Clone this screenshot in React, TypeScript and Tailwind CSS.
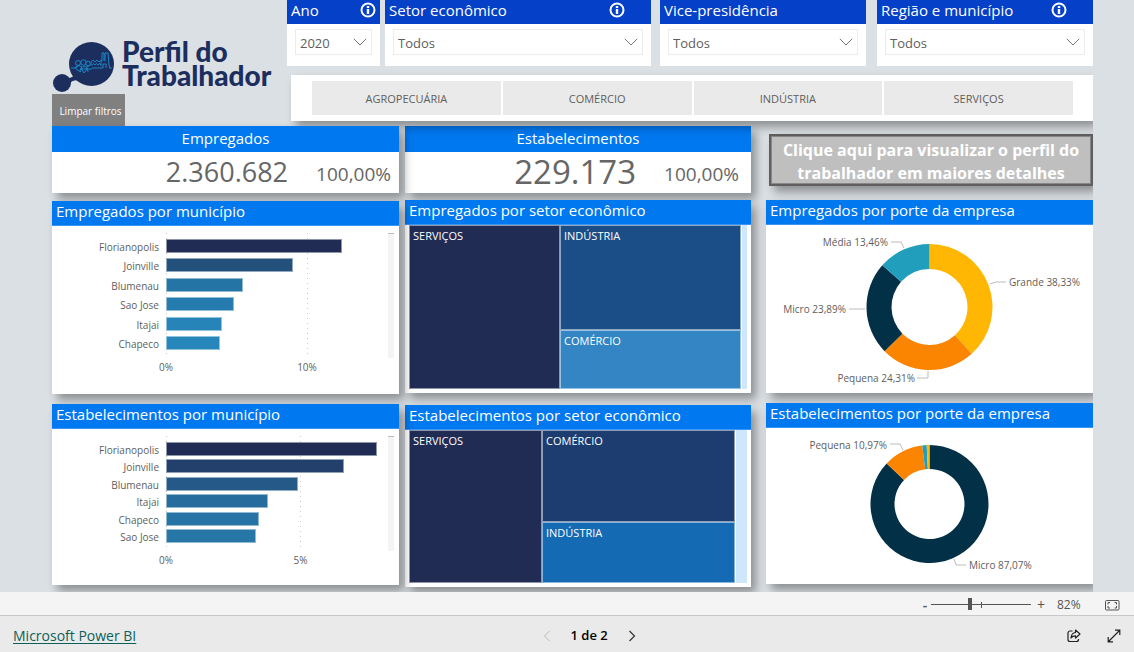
import type { FC, ReactNode } from "react";
import clsx from "clsx";

type Bar = { label: string; value: number; color: string };
type Slice = { value: number; color: string };
type Callout = { text: string; x: number; y: number; line: string; anchor?: "start" | "end" };

const employeesByCity: Bar[] = [
    { label: "Florianopolis", value: 12.45, color: "#212c55" },
    { label: "Joinville", value: 9.0, color: "#24507c" },
    { label: "Blumenau", value: 5.45, color: "#2574a6" },
    { label: "Sao Jose", value: 4.85, color: "#267bae" },
    { label: "Itajai", value: 3.95, color: "#2784b8" },
    { label: "Chapeco", value: 3.85, color: "#2786ba" },
];

const companiesByCity: Bar[] = [
    { label: "Florianopolis", value: 7.84, color: "#212c55" },
    { label: "Joinville", value: 6.6, color: "#233f6b" },
    { label: "Blumenau", value: 4.9, color: "#255a88" },
    { label: "Itajai", value: 3.78, color: "#266d9e" },
    { label: "Chapeco", value: 3.45, color: "#2674a6" },
    { label: "Sao Jose", value: 3.35, color: "#2676a8" },
];

const employeesBySize: Slice[] = [
    { value: 38.33, color: "#ffb703" },
    { value: 24.31, color: "#fb8500" },
    { value: 23.89, color: "#023047" },
    { value: 13.46, color: "#219ebc" },
];

const companiesBySize: Slice[] = [
    { value: 87.07, color: "#023047" },
    { value: 10.97, color: "#fb8500" },
    { value: 1.2, color: "#219ebc" },
    { value: 0.76, color: "#ffb703" },
];

const shadow = "shadow-[5px_6px_9px_rgba(0,0,0,0.36)]";
const gridline =
    "absolute inset-y-0 w-px bg-[repeating-linear-gradient(to_bottom,#ccc_0_1px,transparent_1px_5px)]";

const InfoIcon: FC = () => (
    <svg viewBox="0 0 16 16" className="size-4" fill="none" stroke="#fff" aria-hidden="true">
        <circle cx="8" cy="8" r="6.5" strokeWidth="2" />
        <path d="M8 7v5M8 4v2" strokeWidth="2.4" />
    </svg>
);

const Logo: FC = () => (
    <div className="flex items-center gap-2 text-[#1c2e5e]">
        <svg viewBox="0 0 62 52" className="w-[62px] h-[52px] shrink-0" aria-hidden="true">
            <ellipse cx="39.5" cy="24" rx="22.5" ry="22" fill="currentColor" />
            <circle cx="10" cy="43" r="9" fill="currentColor" />
            <path d="M16 38Q21 38 24 33L31 42Q22 38 18 43Z" fill="currentColor" />
            <g fill="none" stroke="#1c8fd0" strokeWidth="0.9">
                <path d="M19 28h5q1-2 3-2.5M28 29h12M40 28h11v-4h3v4M57 28h3" />
                <circle cx="26" cy="23" r="2.5" />
                <circle cx="31.5" cy="22.5" r="2.7" />
                <circle cx="36" cy="23.5" r="2.3" />
                <path d="M23 29q1-4 4-3.500 3 0 3 4M28 32q0-5 4-5.500 4 0 4 5.500M34 29q0-3 3-3" />
                <path d="M29 28l3 5 4-5M24 29l5 3" />
                <path d="M39 26v-4l2-2 2 2 2-2 2 2 2-2v6M40 25q2-3 3 0 2-3 3 0 2-3 3 0" />
                <path d="M50 21v-8h2v8M53 21v-8h3l1 12 1 3" />
            </g>
        </svg>
        <p className="pb-1.5 font-[Lato,sans-serif] font-black text-[28px] leading-6 whitespace-nowrap">
            Perfil do
            <br />
            Trabalhador
        </p>
    </div>
);

const Filter: FC<{ id: string; label: string; value: string; info?: string; className: string }> = ({
    id,
    label,
    value,
    info,
    className,
}) => (
    <div className={clsx("min-w-0 bg-white h-[66px]", className)}>
        <div className={clsx("flex items-center justify-between h-6 pl-1 pb-1 bg-[#0540c8] text-white", info)}>
            <label htmlFor={id} className="text-[15px] leading-[18px] whitespace-nowrap">
                {label}
            </label>
            {info && <InfoIcon />}
        </div>
        <div className="relative mt-[5px] mx-2 h-[26px] border border-[#ececec]">
            <select
                id={id}
                className="appearance-none block w-full h-full pl-1 pt-1 text-[13px] text-[#605e5c] bg-white"
            >
                <option>{value}</option>
            </select>
            <svg
                viewBox="0 0 14 8"
                className="absolute right-1 top-2 w-3.5 h-2 pointer-events-none"
                fill="none"
                stroke="#777"
                aria-hidden="true"
            >
                <path d="M.8.8 7 7 13.200.8" />
            </svg>
        </div>
    </div>
);

const Kpi: FC<{ title: string; children: ReactNode }> = ({ title, children }) => (
    <section className={clsx("h-[67px] bg-white text-[#666]", shadow)}>
        <h2 className="h-[26px] text-center text-[15px] leading-6 text-white bg-[#0078f0]">{title}</h2>
        <div className="flex items-center justify-end h-10 gap-7">{children}</div>
    </section>
);

const Card: FC<{ title: string; className: string; children: ReactNode }> = ({ title, className, children }) => (
    <section className={clsx("flex flex-col bg-white", shadow, className)}>
        <h2 className="h-[25px] shrink-0 pl-1 text-[15px] leading-5 text-white bg-[#0078f0] border-b border-[#3a95f5] whitespace-nowrap">
            {title}
        </h2>
        {children}
    </section>
);

const BarChart: FC<{ bars: Bar[]; max: number; tick: number; plot: string }> = ({ bars, max, tick, plot }) => (
    <div className="flex pt-[7px] pr-[5px] text-[10px] leading-3 text-[#605e5c]">
        <div className={clsx("flex flex-col justify-between w-[107px] mr-[7px] pt-1.5 pb-2 text-right", plot)}>
            {bars.map((bar) => (
                <span key={bar.label} className="h-3.5 leading-4">
                    {bar.label}
                </span>
            ))}
        </div>
        <div className="flex-1 mr-0.5">
            <div className={clsx("relative flex flex-col justify-between pt-1.5 pb-2", plot)}>
                <i className={clsx(gridline, "left-0")} />
                <i className={gridline} style={{ left: `${(tick / max) * 100}%` }} />
                {bars.map((bar) => (
                    <div
                        key={bar.label}
                        className="relative h-3.5 border border-white/50"
                        style={{ width: `${(bar.value / max) * 100}%`, backgroundColor: bar.color }}
                    />
                ))}
            </div>
            <div className="relative h-3 mt-[3px]">
                <span className="absolute left-0 -translate-x-1/2">0%</span>
                <span className="absolute -translate-x-1/2" style={{ left: `${(tick / max) * 100}%` }}>
                    {tick}%
                </span>
            </div>
        </div>
        <div className={clsx("w-1.5 bg-[#f4f4f4] border-t border-[#bbb]", plot)} />
    </div>
);

const Tile: FC<{ label: string; className: string }> = ({ label, className }) => (
    <div className={clsx("pl-[3px] pt-0.5 text-[11px] leading-4 text-white border border-white/50", className)}>
        {label}
    </div>
);

const arc = (cx: number, cy: number, outer: number, inner: number, from: number, to: number) => {
    const at = (r: number, t: number) =>
        `${cx + r * Math.sin(t * 2 * Math.PI)} ${cy - r * Math.cos(t * 2 * Math.PI)}`;
    const large = to - from > 0.5 ? 1 : 0;
    return `M${at(outer, from)}A${outer} ${outer} 0 ${large} 1 ${at(outer, to)}L${at(inner, to)}A${inner} ${inner} 0 ${large} 0 ${at(inner, from)}Z`;
};

const Donut: FC<{ slices: Slice[]; cy: number; outer: number; inner: number; callouts: Callout[]; title: string }> = ({
    slices,
    cy,
    outer,
    inner,
    callouts,
    title,
}) => {
    let start = 0;

    return (
        <svg viewBox="0 0 327 156" className="w-full h-[156px] overflow-visible" role="img" aria-label={title}>
            {slices.map((slice) => {
                const from = start;
                start += slice.value / 100;
                return (
                    <path
                        key={slice.color}
                        d={arc(163.5, cy, outer, inner, from, Math.min(start, 1))}
                        fill={slice.color}
                    />
                );
            })}
            {callouts.map((callout) => (
                <g key={callout.text}>
                    <path d={callout.line} fill="none" stroke="#bbb" />
                    <text x={callout.x} y={callout.y} fontSize="10" fill="#605e5c" textAnchor={callout.anchor}>
                        {callout.text}
                    </text>
                </g>
            ))}
        </svg>
    );
};

const StatusBar: FC = () => (
    <div className="flex items-center justify-end h-6 pt-0.5 pr-3.5 bg-[#f4f4f4] border-b border-[#c8c8c8] text-[#555]">
        <button type="button" aria-label="Reduzir" className="w-3 text-sm leading-5 font-semibold">
            -
        </button>
        <div className="relative flex items-center w-[100px] mr-0.5">
            <i className="absolute left-[50px] h-1.5 border-l border-[#555]" />
            <input
                type="range"
                aria-label="Zoom"
                min={0}
                max={100}
                defaultValue={39}
                className="relative w-full h-3 appearance-none bg-transparent [&::-webkit-slider-runnable-track]:h-px [&::-webkit-slider-runnable-track]:bg-[#555] [&::-webkit-slider-thumb]:appearance-none [&::-webkit-slider-thumb]:w-1 [&::-webkit-slider-thumb]:h-3 [&::-webkit-slider-thumb]:-mt-1.5 [&::-webkit-slider-thumb]:bg-[#555]"
            />
        </div>
        <button type="button" aria-label="Ampliar" className="w-4 text-sm leading-5">
            +
        </button>
        <span className="w-8 ml-2 text-xs">82%</span>
        <button type="button" aria-label="Ajustar à página" className="ml-4">
            <svg viewBox="0 0 15 12" className="w-[15px] h-3" fill="none" stroke="#555" aria-hidden="true">
                <rect x=".5" y="1.5" width="13.5" height="9.5" rx="1" />
                <path d="M5 3.500H3v2M9.500 3.500h2v2M5 9H3V7M9.500 9h2V7" />
            </svg>
        </button>
    </div>
);

const Footer: FC = () => (
    <footer className="flex items-center justify-between flex-1 min-h-9 pt-[3px] pl-[13px] pr-3 bg-[#eaeaea]">
        <a href="https://powerbi.microsoft.com" className="text-sm text-[#0b6158] underline underline-offset-2">
            Microsoft Power BI
        </a>
        <nav className="flex items-center gap-5 pr-6 text-[13px] font-semibold text-black">
            <button type="button" aria-label="Página anterior" disabled>
                <svg viewBox="0 0 8 12" className="w-2 h-3" fill="none" stroke="#bbb" aria-hidden="true">
                    <path d="M6.500 1 1.500 6l5 5" />
                </svg>
            </button>
            <span>1 de 2</span>
            <button type="button" aria-label="Próxima página">
                <svg viewBox="0 0 8 12" className="w-2 h-3" fill="none" stroke="#333" strokeWidth="1.2" aria-hidden="true">
                    <path d="M1.500 1l5 5-5 5" />
                </svg>
            </button>
        </nav>
        <div className="flex items-center gap-6">
            <button type="button" aria-label="Compartilhar">
                <svg viewBox="0 0 16 16" className="size-4" fill="none" stroke="#222" strokeWidth="1.2" aria-hidden="true">
                    <path d="M6.500 3H4a2 2 0 0 0-2 2v6.500a2 2 0 0 0 2 2h6.500a2 2 0 0 0 2-2V11" />
                    <path d="M9.500 2l4.500 4-4.500 4V7.800Q6.500 7.800 5 10 5.500 4.800 9.500 4.500Z" strokeLinejoin="round" />
                </svg>
            </button>
            <button type="button" aria-label="Tela cheia">
                <svg viewBox="0 0 16 16" className="size-4" fill="none" stroke="#222" strokeWidth="1.2" aria-hidden="true">
                    <path d="M2.500 13.500l11-11M9 2.200h4.800V7M2.200 9v4.800H7" />
                </svg>
            </button>
        </div>
    </footer>
);

export default function App() {
    return (
        <div className="flex flex-col min-h-screen font-['Open_Sans','Noto_Sans',sans-serif] bg-[#dbe0e4]">
            <main className="mr-[41px] pl-[52px] pb-[5px] overflow-hidden">
                <div className="relative z-20 flex">
                    <div className="flex flex-col items-start justify-between w-[235px] shrink-0 pt-[39px] h-[126px]">
                        <Logo />
                        <button
                            type="button"
                            className="h-8 w-[73px] pl-1 pt-0.5 bg-[#808080] text-[10px] text-white whitespace-nowrap"
                        >
                            Limpar filtros
                        </button>
                    </div>
                    <div className="flex-1 min-w-0">
                        <div className="flex">
                            <Filter id="ano" label="Ano" value="2020" info="pr-1" className="flex-[93] mr-[5px]" />
                            <Filter
                                id="setor"
                                label="Setor econômico"
                                value="Todos"
                                info="pr-[26px]"
                                className="flex-[266] mr-[9px]"
                            />
                            <Filter id="vice" label="Vice-presidência" value="Todos" className="flex-[206] mr-[11px]" />
                            <Filter
                                id="regiao"
                                label="Região e município"
                                value="Todos"
                                info="pr-[26px]"
                                className="flex-[216]"
                            />
                        </div>
                        <div className={clsx("flex gap-0.5 mt-[9px] ml-1 py-1.5 pl-[21px] pr-5 bg-white", shadow)}>
                            {["AGROPECUÁRIA", "COMÉRCIO", "INDÚSTRIA", "SERVIÇOS"].map((sector) => (
                                <button
                                    key={sector}
                                    type="button"
                                    className="flex-1 h-[34px] pt-0.5 bg-[#eaeaea] text-[11px] text-[#605e5c]"
                                >
                                    {sector}
                                </button>
                            ))}
                        </div>
                    </div>
                </div>

                <div className="flex items-start">
                    <div className="relative z-30 flex-[347] min-w-0 mr-1.5">
                        <Kpi title="Empregados">
                            <span className="text-[27px]">2.360.682</span>
                            <span className="pr-2 pt-1 text-[19px]">100,00%</span>
                        </Kpi>
                        <Card title="Empregados por município" className="mt-2 h-[193px]">
                            <BarChart bars={employeesByCity} max={15.6} tick={10} plot="h-[125px]" />
                        </Card>
                        <Card title="Estabelecimentos por município" className="mt-2.5 h-[181px]">
                            <BarChart bars={companiesByCity} max={8.18} tick={5} plot="h-[115px]" />
                        </Card>
                    </div>

                    <div className="relative z-10 flex-[346] min-w-0 mr-[15px]">
                        <Kpi title="Estabelecimentos">
                            <span className="text-[33px]">229.173</span>
                            <span className="pr-3 pt-1 text-[19px]">100,00%</span>
                        </Kpi>
                        <Card title="Empregados por setor econômico" className="mt-[7px] h-[193px]">
                            <div className="flex flex-1 px-1 pb-1">
                                <Tile label="SERVIÇOS" className="flex-[146] bg-[#212c55]" />
                                <div className="flex flex-col flex-[181]">
                                    <Tile label="INDÚSTRIA" className="flex-[100] bg-[#1b4e86]" />
                                    <Tile label="COMÉRCIO" className="flex-[55] bg-[#3385c4]" />
                                </div>
                                <div className="w-[5px] ml-px bg-[#cfe7fd]" />
                            </div>
                        </Card>
                        <Card title="Estabelecimentos por setor econômico" className="mt-3 h-[182px]">
                            <div className="flex flex-1 px-1 pb-1">
                                <Tile label="SERVIÇOS" className="flex-[128] bg-[#212c55]" />
                                <div className="flex flex-col flex-[193]">
                                    <Tile label="COMÉRCIO" className="flex-[87] bg-[#1d3d71]" />
                                    <Tile label="INDÚSTRIA" className="flex-[56] bg-[#146ab3]" />
                                </div>
                                <div className="w-[11px] ml-px bg-[#cfe7fd]" />
                            </div>
                        </Card>
                    </div>

                    <div className="flex-[327] min-w-0 pt-2">
                        <div className="pl-[3px]">
                            <button
                                type="button"
                                className={clsx(
                                    "block w-full h-[52px] pt-[3px] bg-[#bfbfbf] border-2 border-[#605e5e] ring-1 ring-inset ring-[#888] text-base leading-[23px] font-bold text-white",
                                    shadow,
                                )}
                            >
                                Clique aqui para visualizar o perfil do
                                <br />
                                trabalhador em maiores detalhes
                            </button>
                        </div>
                        <Card title="Empregados por porte da empresa" className="mt-3.5 h-[193px]">
                            <Donut
                                title="Empregados por porte da empresa"
                                slices={employeesBySize}
                                cy={82}
                                outer={63}
                                inner={38}
                                callouts={[
                                    { text: "Grande 38,33%", x: 243, y: 61, line: "M224 59l6-2h10" },
                                    { text: "Pequena 24,31%", x: 149, y: 157, line: "M151 153h11v-7", anchor: "end" },
                                    { text: "Micro 23,89%", x: 80, y: 88, line: "M83 84h16", anchor: "end" },
                                    { text: "Média 13,46%", x: 122, y: 21, line: "M125 17h10l3 6", anchor: "end" },
                                ]}
                            />
                        </Card>
                        <Card title="Estabelecimentos por porte da empresa" className="mt-2.5 h-[181px]">
                            <Donut
                                title="Estabelecimentos por porte da empresa"
                                slices={companiesBySize}
                                cy={76}
                                outer={59}
                                inner={35}
                                callouts={[
                                    { text: "Micro 87,07%", x: 203, y: 141, line: "M188 131l2 6h10" },
                                    { text: "Pequena 10,97%", x: 121, y: 21, line: "M124 16h10l3 6", anchor: "end" },
                                ]}
                            />
                        </Card>
                    </div>
                </div>
            </main>
            <StatusBar />
            <Footer />
        </div>
    );
}
